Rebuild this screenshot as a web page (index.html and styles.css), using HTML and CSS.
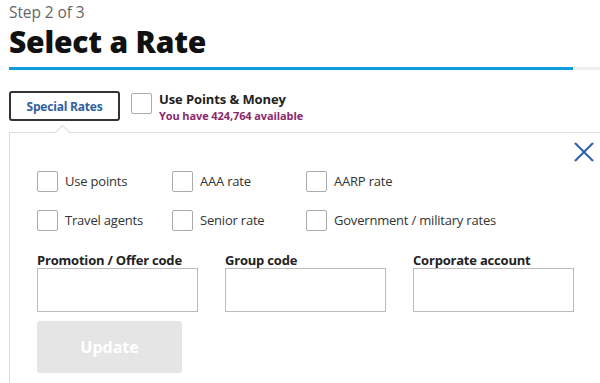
FILE: index.html
```html
<!DOCTYPE html>
<html>
<head>
<meta charset="utf-8">
<link rel="stylesheet" href="styles.css">
</head>
<body>
<div class="page">
  <div class="step">Step 2 of 3</div>
  <h1 class="title">Select a Rate</h1>
  <div class="progress"><div class="progress-fill"></div></div>
  <div class="options">
    <button class="special">Special Rates</button>
    <div class="pm">
      <span class="box"></span>
      <div class="pm-text">
        <div class="pm-title">Use Points &amp; Money</div>
        <div class="pm-sub">You have 424,764 available</div>
      </div>
    </div>
  </div>
  <div class="panel">
    <span class="arrow"></span>
    <div class="close">
      <svg width="20" height="20" viewBox="0 0 20 20"><path d="M1 1 L19 19 M19 1 L1 19" stroke="#2d5fa5" stroke-width="2" fill="none"/></svg>
    </div>
    <div class="checks">
      <label class="chk"><span class="box"></span>Use points</label>
      <label class="chk"><span class="box"></span>AAA rate</label>
      <label class="chk"><span class="box"></span>AARP rate</label>
      <label class="chk"><span class="box"></span>Travel agents</label>
      <label class="chk"><span class="box"></span>Senior rate</label>
      <label class="chk"><span class="box"></span>Government / military rates</label>
    </div>
    <div class="fields">
      <div class="field"><div class="flabel">Promotion / Offer code</div><div class="input"></div></div>
      <div class="field"><div class="flabel">Group code</div><div class="input"></div></div>
      <div class="field"><div class="flabel">Corporate account</div><div class="input"></div></div>
    </div>
    <button class="update">Update</button>
  </div>
</div>
</body>
</html>
```
FILE: styles.css
```css
* { box-sizing: border-box; }
html, body { margin: 0; padding: 0; background: #fff; }
body { font-family: "Open Sans", "Lato", sans-serif; color: #333; overflow: hidden; }
.page { padding: 2px 0 0 9px; width: 600px; height: 383px; }
.step { font-size: 15.5px; color: #666; line-height: 20px; letter-spacing: -0.1px; }
.title { margin: -1px 0 0 0; font-size: 30px; font-weight: 800; color: #111; line-height: 41px; letter-spacing: -0.2px; }
.progress { margin-top: 5px; height: 3px; background: #eee; }
.progress-fill { width: 564px; height: 3px; background: #0d9ddb; }
.options { display: flex; align-items: flex-start; margin-top: 21px; height: 30px; }
.special { width: 111px; height: 30px; border: 2px solid #333; border-radius: 3px; background: #fff; color: #2d5fa5; font-family: "Open Sans", sans-serif; font-weight: 700; font-size: 12px; padding: 0; letter-spacing: -0.2px; flex: none; }
.box { display: inline-block; width: 21px; height: 21px; border: 1px solid #aaa; border-radius: 2px; background: #fff; flex: none; }
.pm { display: flex; align-items: flex-start; margin-left: 11px; margin-top: 2px; }
.pm-text { margin-left: 7px; margin-top: -2px; }
.pm-title { font-size: 13px; font-weight: 700; color: #222; line-height: 17px; letter-spacing: -0.1px; }
.pm-sub { font-size: 11px; font-weight: 700; color: #8b2a6a; line-height: 15px; letter-spacing: -0.1px; }
.panel { position: relative; margin-top: 11px; border-top: 1px solid #ddd; border-left: 1px solid #ddd; padding: 0 0 0 27px; height: 260px; }
.arrow { position: absolute; left: 47px; top: -6px; width: 11px; height: 11px; background: #fff; border-top: 1px solid #ddd; border-left: 1px solid #ddd; transform: rotate(45deg); }
.close { display: flex; justify-content: flex-end; padding: 9px 6px 0 0; height: 38px; }
.checks { display: grid; grid-template-columns: 135px 134px auto; row-gap: 18px; }
.chk { display: flex; align-items: center; font-size: 13px; color: #333; line-height: 21px; letter-spacing: -0.2px; }
.chk .box { width: 21px; height: 21px; margin-right: 7px; }
.fields { display: flex; gap: 27px; margin-top: 21px; }
.flabel { font-size: 13px; font-weight: 700; color: #222; line-height: 16px; letter-spacing: -0.2px; }
.input { width: 161px; height: 44px; border: 1px solid #bbb; }
.update { margin-top: 9px; width: 145px; height: 52px; border: none; border-radius: 3px; background: #e5e5e5; color: #fff; font-family: "Open Sans", sans-serif; font-weight: 700; font-size: 16px; padding: 0; }
```
